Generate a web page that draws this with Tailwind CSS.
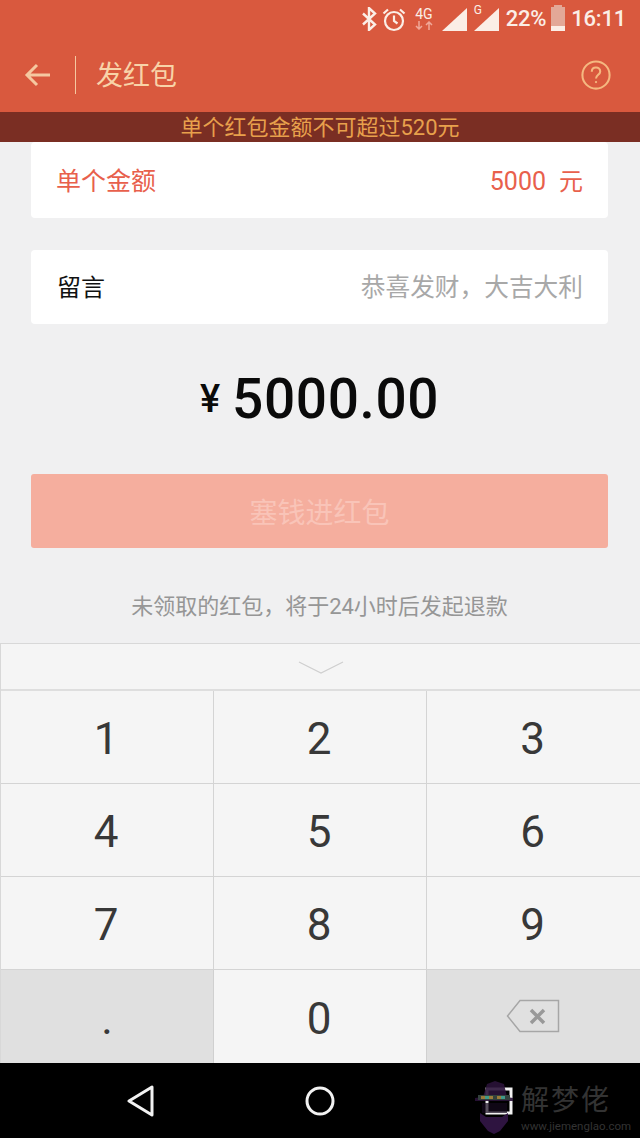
<!DOCTYPE html>
<html lang="zh">
<head>
    <meta charset="UTF-8">
    <title>发红包</title>
    <script src="https://cdn.jsdelivr.net/npm/@tailwindcss/browser@4"></script>
</head>
<body class="bg-[#f0f0f1] font-['Roboto','Noto_Sans_CJK_SC',sans-serif]">
<div class="w-[640px] h-[1138px] flex flex-col overflow-hidden relative">
    <!-- status bar -->
    <div class="h-[38px] bg-[#d9593e] flex items-center justify-end text-[#fbeee6] shrink-0 pr-[14px]">
        <svg width="16" height="24" viewBox="0 0 16 24" fill="none" stroke="#fbeee6" stroke-width="2.4" class="mr-[5px]"><path d="M2 6.500l12 11-6 5.500V1l6 5.500-12 11"/></svg>
        <svg width="24" height="25" viewBox="0 0 24 25" fill="none" stroke="#fbeee6" stroke-width="2.2" class="mr-[7px]"><circle cx="12" cy="14" r="9"/><path d="M12 8.500V14l3.500 2.500M1.500 6.500l4.500-4M22.500 6.500l-4.500-4"/></svg>
        <div class="w-[22px] flex flex-col items-center mr-[7px] leading-none">
            <span class="text-[14px] leading-[13px]">4G</span>
            <svg width="20" height="9" viewBox="0 0 20 9" fill="none" stroke="#f0a898" stroke-width="1.500"><path d="M5 0v8M2 5l3 3 3-3M15 9V1M12 4l3-3 3 3"/></svg>
        </div>
        <svg width="26" height="23" viewBox="0 0 26 23" class="mr-[6px]"><path d="M0 23 25 0v23z" fill="#fbeee6"/></svg>
        <div class="relative w-[26px] h-[23px] mr-[6px]">
            <span class="absolute left-0 top-[-4px] text-[12px] leading-[12px]">G</span>
            <svg width="26" height="23" viewBox="0 0 26 23"><path d="M0 23 25 0v23z" fill="#fbeee6"/></svg>
        </div>
        <span class="text-[22px] font-medium leading-none mr-[5px] tracking-[-0.3px]">22%</span>
        <div class="w-[14px] h-[24px] relative bg-[#e3a897] mr-[6px]">
            <div class="absolute left-[3px] top-[-2px] w-[8px] h-[2px] bg-[#e3a897]"></div>
            <div class="absolute left-0 right-0 bottom-0 h-[5px] bg-[#fbeee6]"></div>
        </div>
        <span class="text-[22px] font-medium leading-none tracking-[-0.2px]">16:11</span>
    </div>

    <!-- title bar -->
    <div class="h-[74px] bg-[#d9593e] flex items-center shrink-0 text-[#f8d3a8]">
        <svg width="28" height="28" viewBox="0 0 28 28" fill="none" stroke="#f5c8a0" stroke-width="3" class="ml-[24px]"><path d="M26 14H3M13 4 3 14l10 10"/></svg>
        <div class="w-px h-[38px] bg-[#f5c8a0] ml-[23px]"></div>
        <span class="text-[27px] ml-[20px] leading-none pt-[2px]">发红包</span>
        <svg width="30" height="30" viewBox="0 0 32 32" fill="none" stroke="#f5b880" stroke-width="2.200" class="ml-auto mr-[29px]"><circle cx="16" cy="16" r="14.500"/><path d="M11.500 12.500c0-2.800 2-4.500 4.500-4.500s4.500 1.700 4.500 4.200c0 3.600-4.500 3.600-4.500 7.600"/><circle cx="16" cy="23.500" r="1.200" fill="#f5b880" stroke="none"/></svg>
    </div>

    <!-- limit warning -->
    <div class="h-[30px] bg-[#7a2e23] text-[#e8a04c] text-[22px] flex items-center justify-center shrink-0 leading-none pt-[1px]">单个红包金额不可超过520元</div>

    <!-- form -->
    <div class="pl-[31px] pr-[32px] shrink-0">
        <div class="h-[76px] bg-white rounded-[4px] flex items-center justify-between pl-[25px] pr-[25px] pt-[3px] text-[#e8604c] text-[25px] leading-none">
            <span>单个金额</span>
            <span class="flex items-center"><span class="text-[25px]">5000</span><span class="ml-[13px] text-[24px]">元</span></span>
        </div>
        <div class="h-[74px] mt-[32px] bg-white rounded-[4px] flex items-center justify-between pl-[26px] pr-[25px] pt-[2px] text-[24.700px] leading-none">
            <span class="text-[#111111] text-[24px]">留言</span>
            <span class="text-[#a8a8a8]">恭喜发财，大吉大利</span>
        </div>
        <div class="h-[150px] flex items-center justify-center text-[#0a0a0a] font-medium leading-none">
            <span class="text-[38px] mr-[12px] font-medium">¥</span>
            <span class="text-[55px] tracking-[0.6px]">5000.00</span>
        </div>
        <div class="h-[74px] bg-[#f5ae9e] rounded-[3px] flex items-center justify-center pt-[5px] text-[#f9c4b8] text-[28px] leading-none">塞钱进红包</div>
        <div class="h-[95px] pt-[23px] flex items-center justify-center text-[#969696] text-[22px] leading-none">未领取的红包，将于24小时后发起退款</div>
    </div>

    <!-- keypad -->
    <div class="h-[420px] flex flex-col shrink-0 bg-[#f5f5f5] border-l border-[#d8d8d8] border-t">
        <div class="h-[47px] pt-[3px] border-b-2 border-[#dedede] flex items-center justify-center shrink-0">
            <svg width="46" height="16" viewBox="0 0 46 16" fill="none" stroke="#cfcfcf" stroke-width="1.200"><path d="M1 2l22 11L45 2"/></svg>
        </div>
        <div class="grid grid-cols-3 grid-rows-4 flex-1 text-[44px] text-[#383838] leading-none">
            <div class="flex items-center justify-center pt-[4px] pr-[2px] border-r border-b border-[#d4d4d4]">1</div>
            <div class="flex items-center justify-center pt-[4px] pr-[2px] border-r border-b border-[#d4d4d4]">2</div>
            <div class="flex items-center justify-center pt-[4px] pr-[2px] border-b border-[#d4d4d4]">3</div>
            <div class="flex items-center justify-center pt-[4px] pr-[2px] border-r border-b border-[#d4d4d4]">4</div>
            <div class="flex items-center justify-center pt-[4px] pr-[2px] border-r border-b border-[#d4d4d4]">5</div>
            <div class="flex items-center justify-center pt-[4px] pr-[2px] border-b border-[#d4d4d4]">6</div>
            <div class="flex items-center justify-center pt-[4px] pr-[2px] border-r border-b border-[#d4d4d4]">7</div>
            <div class="flex items-center justify-center pt-[4px] pr-[2px] border-r border-b border-[#d4d4d4]">8</div>
            <div class="flex items-center justify-center pt-[4px] pr-[2px] border-b border-[#d4d4d4]">9</div>
            <div class="flex items-center justify-center pt-[4px] border-r border-[#d0d0d0] bg-[#e0e0e0]">.</div>
            <div class="flex items-center justify-center pt-[4px] pr-[2px] border-r border-[#d0d0d0]">0</div>
            <div class="flex items-center justify-center pr-[2px] pb-[2px] bg-[#e0e0e0]">
                <svg width="54" height="34" viewBox="0 0 54 34" fill="none"><path d="M14 1.500h38.500v31H14L1.500 17z" stroke="#a6a6a6" stroke-width="1.500"/><path d="M25 11l13 13M38 11 25 24" stroke="#999999" stroke-width="3.500"/></svg>
            </div>
        </div>
    </div>

    <!-- nav bar -->
    <div class="flex-1 bg-black flex items-center justify-between relative pl-[127px] pr-[127px]">
        <svg width="28" height="32" viewBox="0 0 28 32" fill="none" stroke="#f2f2f2" stroke-width="3" stroke-linejoin="round"><path d="M25 2v28L2 16z"/></svg>
        <svg width="30" height="30" viewBox="0 0 30 30" fill="none" stroke="#f2f2f2" stroke-width="3"><circle cx="15" cy="15" r="13"/></svg>
        <svg width="28" height="28" viewBox="0 0 28 28" fill="none" stroke="#f2f2f2" stroke-width="3"><rect x="2" y="2" width="24" height="24"/></svg>

        <!-- watermark, sits over the recents button -->
        <svg width="40" height="56" viewBox="0 0 40 56" class="absolute left-[474px] top-[16px]">
            <path d="M9 18 13 5l8-3 9 3 3 13 6 1v3H1v-3z" fill="#2a1338" opacity="0.9"/>
            <path d="M8 24h25v10H8z" fill="#160a1e" opacity="0.7"/>
            <path d="M6 34 12 38h16l6-4v8l-8 10-6 3-6-3-8-10z" fill="#2e1440"/>
            <path d="M4 16h32v5H4z" fill="#33413c"/>
            <path d="M7 17h4v3H7zM15 17h4v3h-4zM23 17h4v3h-4z" fill="#9a7a3a"/>
            <path d="M11 17h4v3h-4zM27 17h4v3h-4z" fill="#3f9a8a"/>
        </svg>
        <div class="absolute left-[521px] top-[22px] flex flex-col items-start text-[#333333]">
            <span class="text-[28px] leading-[32px] tracking-[2px]">解梦佬</span>
            <span class="text-[11.500px] leading-[12px] mt-[3px] whitespace-nowrap">www.jiemenglao.com</span>
        </div>
    </div>
</div>
</body>
</html>
